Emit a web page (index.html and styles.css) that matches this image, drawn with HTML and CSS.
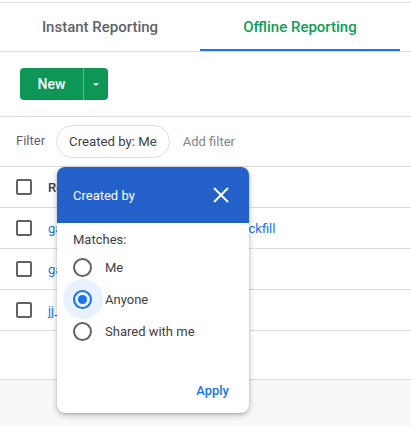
FILE: index.html
```html
<!DOCTYPE html>
<html lang="en">
<head>
  <meta charset="UTF-8" />
  <meta name="viewport" content="width=device-width, initial-scale=1" />
  <title>Offline Reporting</title>
  <link rel="stylesheet" href="styles.css">
</head>
<body>

  <div class="top-edge"></div>

  <div class="tabs">
    <div class="tab">Instant Reporting</div>
    <div class="tab active">Offline Reporting</div>
  </div>

  <div class="toolbar">
    <div class="split-button">
      <span class="main">New</span>
      <span class="drop"><span class="caret"></span></span>
    </div>
  </div>

  <div class="filter-row">
    <span class="filter-label">Filter</span>
    <span class="chip">Created by: Me</span>
    <span class="add-filter">Add filter</span>
  </div>

  <div class="table">
    <div class="row header">
      <span class="checkbox"></span>
      <span class="cell">Report name</span>
    </div>
    <div class="row">
      <span class="checkbox"></span>
      <a class="cell link">ga_sessions_daily_report_2023_backfill</a>
    </div>
    <div class="row">
      <span class="checkbox"></span>
      <a class="cell link">ga_weekly_summary</a>
    </div>
    <div class="row">
      <span class="checkbox"></span>
      <a class="cell link">jj_test_report</a>
    </div>
  </div>

  <div class="spacer"></div>
  <div class="footer"></div>

  <!-- filter popup -->
  <div class="popup">
    <div class="popup-header">
      <span>Created by</span>
      <svg class="close" width="24" height="24" viewBox="0 0 24 24" fill="none" stroke="#fff" stroke-width="2">
        <path d="M5 5L19 19"></path>
        <path d="M19 5L5 19"></path>
      </svg>
    </div>
    <div class="popup-body">
      <p class="matches">Matches:</p>
      <label class="option"><span class="radio"></span>Me</label>
      <label class="option"><span class="radio checked"></span>Anyone</label>
      <label class="option"><span class="radio"></span>Shared with me</label>
    </div>
    <div class="popup-footer">
      <span class="apply">Apply</span>
    </div>
  </div>

</body>
</html>
```

FILE: styles.css
```css
* {
  margin: 0;
  padding: 0;
  box-sizing: border-box;
  font-family: Roboto, "Liberation Sans", sans-serif;
}
body {
  width: 411px;
  height: 426px;
  background: #fff;
  color: #3c4043;
  position: relative;
  overflow: hidden;
  display: flex;
  flex-direction: column;
}
.top-edge {
  height: 3px;
  border-top: 2px solid #fff;
  border-bottom: 1px solid #e0e0e0;
}
.tabs {
  display: flex;
  height: 49px;
  border-bottom: 1px solid #dadce0;
}
.tab {
  width: 200px;
  display: flex;
  align-items: center;
  justify-content: center;
  padding-top: 2px;
  font-size: 15px;
  font-weight: 500;
  color: #5f6368;
  border-bottom: 2px solid transparent;
}
.tab.active {
  color: #0f9d58;
  border-bottom-color: #1a73e8;
}
.toolbar {
  padding: 16px 20px;
  border-bottom: 1px solid #dadce0;
}
.split-button {
  display: inline-flex;
  height: 32px;
  background: #0d9655;
  border-radius: 4px;
  color: #fff;
  font-size: 14px;
  font-weight: 500;
}
.split-button .main {
  width: 64px;
  display: flex;
  align-items: center;
  justify-content: center;
  border-right: 1px solid rgba(255, 255, 255, 0.35);
}
.split-button .drop {
  width: 24px;
  display: flex;
  align-items: center;
  justify-content: center;
}
.caret {
  width: 0;
  height: 0;
  border-left: 3px solid transparent;
  border-right: 3px solid transparent;
  border-top: 3px solid #fff;
}
.filter-row {
  height: 50px;
  display: flex;
  align-items: center;
  padding-left: 16px;
  border-bottom: 1px solid #dadce0;
  font-size: 13px;
}
.filter-label {
  color: #5f6368;
  margin-right: 11px;
  margin-top: -2px;
}
.chip {
  height: 33px;
  padding: 0 12px;
  display: flex;
  align-items: center;
  border: 1px solid #dadce0;
  border-radius: 17px;
  color: #3c4043;
  font-size: 13.2px;
}
.add-filter {
  margin-left: 13px;
  color: #80868b;
}
.row {
  height: 41px;
  display: flex;
  align-items: center;
  padding-left: 16px;
  border-bottom: 1px solid #dadce0;
  font-size: 13px;
}
.checkbox {
  width: 16px;
  height: 16px;
  border: 2px solid #5f6368;
  border-radius: 2px;
  margin-right: 16px;
}
.header .cell {
  color: #3c4043;
  font-weight: 500;
}
.link {
  color: #1a73e8;
  white-space: nowrap;
}
.spacer {
  height: 48px;
}
.footer {
  flex: 1;
  background: #f8f8f8;
  border-top: 1px solid #dadce0;
}
.popup {
  position: absolute;
  left: 57px;
  top: 167px;
  width: 192px;
  height: 246px;
  background: #fff;
  border-radius: 8px;
  box-shadow: 0 2px 6px rgba(0, 0, 0, 0.25), 0 1px 2px rgba(0, 0, 0, 0.15);
  display: flex;
  flex-direction: column;
  overflow: hidden;
}
.popup-header {
  height: 56px;
  background: #2460c9;
  color: #fff;
  display: flex;
  align-items: center;
  justify-content: space-between;
  padding: 0 16px;
  font-size: 13px;
}
.popup-body {
  padding: 8px 16px 0 16px;
  font-size: 13px;
  color: #3c4043;
}
.matches {
  line-height: 18px;
  margin-bottom: 2px;
}
.option {
  height: 32px;
  display: flex;
  align-items: center;
}
.radio {
  width: 19px;
  height: 19px;
  border: 2px solid #5f6368;
  border-radius: 50%;
  margin-right: 13px;
  position: relative;
  display: flex;
  align-items: center;
  justify-content: center;
}
.radio.checked {
  border-color: #1a73e8;
}
.radio.checked::before {
  content: "";
  position: absolute;
  width: 40px;
  height: 40px;
  border-radius: 50%;
  background: rgba(26, 115, 232, 0.1);
}
.radio.checked::after {
  content: "";
  width: 9px;
  height: 9px;
  border-radius: 50%;
  background: #1a73e8;
}
.popup-footer {
  margin-top: auto;
  padding: 0 20px 14px 0;
  text-align: right;
}
.apply {
  color: #1a73e8;
  font-size: 13px;
  font-weight: 500;
}
```
